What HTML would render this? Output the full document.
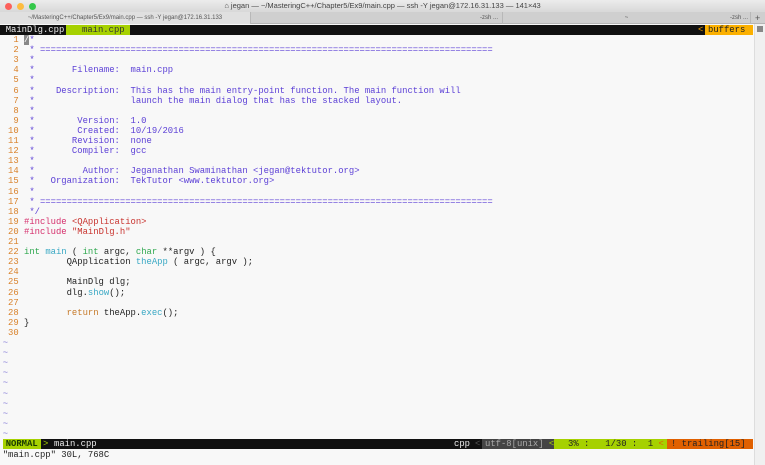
<!DOCTYPE html>
<html><head><meta charset="utf-8"><style>
*{margin:0;padding:0;box-sizing:border-box}
body{width:765px;height:465px;overflow:hidden;background:#f8f8f8;font-family:"Liberation Mono",monospace;font-size:8.88px;position:relative}
.t{position:absolute;left:0;top:0;width:765px;height:12px;background:linear-gradient(#ececec,#d8d8d8);font-family:"Liberation Sans",sans-serif;font-size:7.5px;color:#444;text-align:center;line-height:12px}
.dot{position:absolute;top:3px;width:7px;height:7px;border-radius:50%}
.tabs{position:absolute;left:0;top:12px;width:765px;height:12px;background:#cfcfcf;border-bottom:1px solid #b5b5b5;font-family:"Liberation Sans",sans-serif;font-size:6px;color:#555;line-height:12px}
.tabs div{position:absolute;top:0;height:12px;border-left:1px solid #b8b8b8}
.r{position:absolute;left:2.7px;white-space:pre;height:10.1px;line-height:10.1px}
.n{color:#d9822b}.c{color:#5b3fd6}.p{color:#d6306d}.s{color:#c9342f}.k{color:#2fa84f}.f{color:#38a8c4}.o{color:#c67a2a}.d{color:#222}.tl{color:#8a80d8}
.sb{position:absolute;right:0;top:24px;width:11px;height:441px;background:#f0f0f0;border-left:1px solid #ddd}
</style></head><body>
<div class="t">⌂ jegan — ~/MasteringC++/Chapter5/Ex9/main.cpp — ssh -Y jegan@172.16.31.133 — 141×43</div>
<div class="dot" style="left:5px;background:#fc605b"></div><div class="dot" style="left:17px;background:#fdbc40"></div><div class="dot" style="left:29px;background:#34c84a"></div>
<div class="tabs"><div style="left:0;width:250px;border:none;background:#e0e0e0;text-align:center">~/MasteringC++/Chapter5/Ex9/main.cpp — ssh -Y jegan@172.16.31.133</div><div style="left:250px;width:252px;text-align:right;padding-right:4px">-zsh ...</div><div style="left:502px;width:248px;text-align:center">~</div><div style="left:750px;width:15px"></div><span style="position:absolute;left:730px">-zsh ...</span><span style="position:absolute;left:755px;font-size:9px">+</span></div>
<div style="position:absolute;left:0;top:25px;width:753px;height:10px;background:#111"></div>
<div class="r" style="top:24.9px;left:2.7px;background:#111;color:#eee;padding:0 5px 0 3px">MainDlg.cpp</div>
<div class="r" style="top:24.9px;left:66px;width:64px;background:#a6d100;color:#333;padding:0 0 0 16px">main.cpp</div>
<div class="r" style="top:24.9px;left:698px;color:#f0a000">&lt;</div>
<div class="r" style="top:24.9px;left:705px;background:#fbb000;color:#222;padding:0 6px 0 3px;width:48px">buffers</div>
<div class="r" style="top:35px"><span class="n">  1 </span><span class="c"><span style="background:#888;color:#fff">/</span>*</span></div>
<div class="r" style="top:45.1px"><span class="n">  2 </span><span class="c"> * =====================================================================================</span></div>
<div class="r" style="top:55.2px"><span class="n">  3 </span><span class="c"> *</span></div>
<div class="r" style="top:65.3px"><span class="n">  4 </span><span class="c"> *       Filename:  main.cpp</span></div>
<div class="r" style="top:75.4px"><span class="n">  5 </span><span class="c"> *</span></div>
<div class="r" style="top:85.5px"><span class="n">  6 </span><span class="c"> *    Description:  This has the main entry-point function. The main function will</span></div>
<div class="r" style="top:95.6px"><span class="n">  7 </span><span class="c"> *                  launch the main dialog that has the stacked layout.</span></div>
<div class="r" style="top:105.7px"><span class="n">  8 </span><span class="c"> *</span></div>
<div class="r" style="top:115.8px"><span class="n">  9 </span><span class="c"> *        Version:  1.0</span></div>
<div class="r" style="top:125.9px"><span class="n"> 10 </span><span class="c"> *        Created:  10/19/2016</span></div>
<div class="r" style="top:136px"><span class="n"> 11 </span><span class="c"> *       Revision:  none</span></div>
<div class="r" style="top:146.1px"><span class="n"> 12 </span><span class="c"> *       Compiler:  gcc</span></div>
<div class="r" style="top:156.2px"><span class="n"> 13 </span><span class="c"> *</span></div>
<div class="r" style="top:166.3px"><span class="n"> 14 </span><span class="c"> *         Author:  Jeganathan Swaminathan &lt;jegan@tektutor.org&gt;</span></div>
<div class="r" style="top:176.4px"><span class="n"> 15 </span><span class="c"> *   Organization:  TekTutor &lt;www.tektutor.org&gt;</span></div>
<div class="r" style="top:186.5px"><span class="n"> 16 </span><span class="c"> *</span></div>
<div class="r" style="top:196.6px"><span class="n"> 17 </span><span class="c"> * =====================================================================================</span></div>
<div class="r" style="top:206.7px"><span class="n"> 18 </span><span class="c"> */</span></div>
<div class="r" style="top:216.8px"><span class="n"> 19 </span><span class="p">#include </span><span class="s">&lt;QApplication&gt;</span></div>
<div class="r" style="top:226.9px"><span class="n"> 20 </span><span class="p">#include </span><span class="s">"MainDlg.h"</span></div>
<div class="r" style="top:237px"><span class="n"> 21 </span></div>
<div class="r" style="top:247.1px"><span class="n"> 22 </span><span class="k">int</span> <span class="f">main</span> <span class="d">( </span><span class="k">int</span><span class="d"> argc, </span><span class="k">char</span><span class="d"> **argv ) {</span></div>
<div class="r" style="top:257.2px"><span class="n"> 23 </span><span class="d">        QApplication </span><span class="f">theApp</span><span class="d"> ( argc, argv );</span></div>
<div class="r" style="top:267.3px"><span class="n"> 24 </span></div>
<div class="r" style="top:277.4px"><span class="n"> 25 </span><span class="d">        MainDlg dlg;</span></div>
<div class="r" style="top:287.5px"><span class="n"> 26 </span><span class="d">        dlg.</span><span class="f">show</span><span class="d">();</span></div>
<div class="r" style="top:297.6px"><span class="n"> 27 </span></div>
<div class="r" style="top:307.7px"><span class="n"> 28 </span><span class="o">        return</span><span class="d"> theApp.</span><span class="f">exec</span><span class="d">();</span></div>
<div class="r" style="top:317.8px"><span class="n"> 29 </span><span class="d">}</span></div>
<div class="r" style="top:327.9px"><span class="n"> 30 </span></div>
<div class="r tl" style="top:338px">~</div><div class="r tl" style="top:348.1px">~</div><div class="r tl" style="top:358.2px">~</div><div class="r tl" style="top:368.3px">~</div><div class="r tl" style="top:378.4px">~</div><div class="r tl" style="top:388.5px">~</div><div class="r tl" style="top:398.6px">~</div><div class="r tl" style="top:408.7px">~</div><div class="r tl" style="top:418.8px">~</div><div class="r tl" style="top:428.9px">~</div>
<div style="position:absolute;left:2.7px;top:439px;width:750px;height:10px;background:#111"></div>
<div class="r" style="top:439px;left:2.7px;background:#a6d100;color:#1a3a00;font-weight:bold;padding:0 3px 0 3px">NORMAL</div>
<div class="r" style="top:439px;left:43px;color:#a6d100">&gt;</div>
<div class="r" style="top:439px;left:54px;color:#eee">main.cpp</div>
<div class="r" style="top:439px;left:454px;color:#eee">cpp</div>
<div class="r" style="top:439px;left:475px;color:#555">&lt;</div>
<div class="r" style="top:439px;left:482px;background:#444;color:#aaa;width:72px;padding-left:3px">utf-8[unix] <span style="color:#a6d100">&lt;</span></div>
<div class="r" style="top:439px;left:554px;background:#a6d100;color:#222;width:113px;padding-left:14px">3% :   1/30 :  1 <span style="color:#e06000">&lt;</span></div>
<div class="r" style="top:439px;left:667px;background:#e06000;color:#222;width:86px;padding-left:4px">! trailing[15]</div>
<div class="r d" style="top:449.5px">"main.cpp" 30L, 768C</div>
<div class="sb"><div style="position:absolute;left:2px;top:2px;width:6px;height:6px;background:#888"></div></div>
</body></html>
